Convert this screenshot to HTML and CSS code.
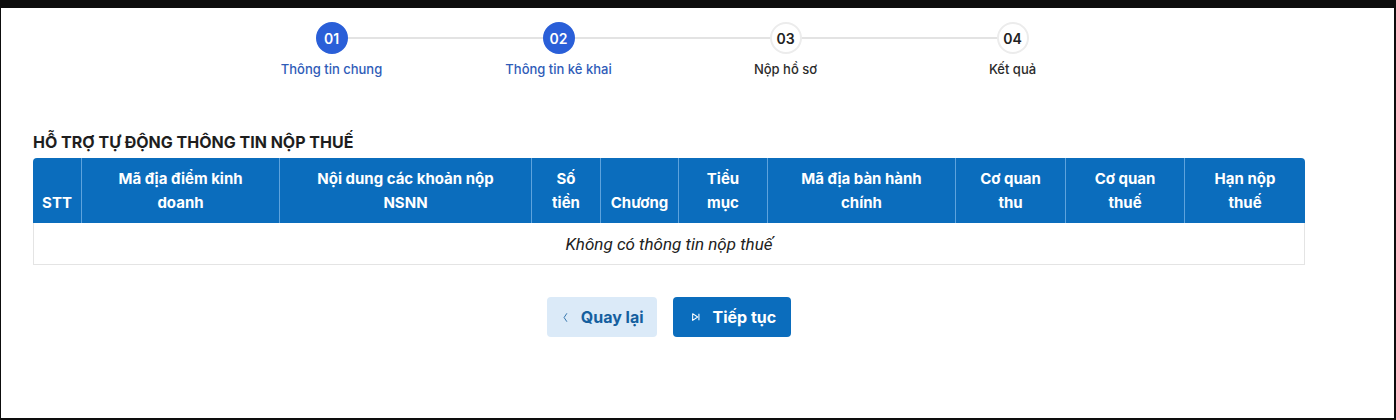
FILE: index.html
```html
<!DOCTYPE html>
<html lang="vi">
<head>
  <meta charset="utf-8">
  <meta name="viewport" content="width=device-width, initial-scale=1.0">
  <title>Khai thuế | Thông tin kê khai</title>
  <link rel="stylesheet" href="styles.css">
</head>
<body>
  <div class="page">
    <ol class="stepper">
      <li class="step done">
        <span class="step-num">01</span>
        <span class="step-label">Thông tin chung</span>
      </li>
      <li class="step done">
        <span class="step-num">02</span>
        <span class="step-label">Thông tin kê khai</span>
      </li>
      <li class="step">
        <span class="step-num">03</span>
        <span class="step-label">Nộp hồ sơ</span>
      </li>
      <li class="step">
        <span class="step-num">04</span>
        <span class="step-label">Kết quả</span>
      </li>
    </ol>

    <h2 class="section-title">Hỗ trợ tự động thông tin nộp thuế</h2>

    <table class="tax-table">
      <thead>
        <tr>
          <th class="col-stt">STT</th>
          <th class="col-ma">Mã địa điểm kinh<br>doanh</th>
          <th class="col-nd">Nội dung các khoản nộp<br>NSNN</th>
          <th class="col-tien">Số<br>tiền</th>
          <th class="col-chuong">Chương</th>
          <th class="col-muc">Tiểu<br>mục</th>
          <th class="col-dbhc">Mã địa bàn hành<br>chính</th>
          <th class="col-cqt">Cơ quan<br>thu</th>
          <th class="col-cqthue">Cơ quan<br>thuế</th>
          <th class="col-han">Hạn nộp<br>thuế</th>
        </tr>
      </thead>
      <tbody>
        <tr>
          <td class="empty" colspan="10">Không có thông tin nộp thuế</td>
        </tr>
      </tbody>
    </table>

    <div class="actions">
      <button class="btn btn-back">
        <svg viewBox="0 0 10 16" width="7" height="13"><path d="M7 2 L3 8 L7 14" fill="none" stroke="currentColor" stroke-width="1.2"/></svg>
        Quay lại
      </button>
      <button class="btn btn-next">
        <svg viewBox="0 0 12 12" width="10" height="10"><path d="M2 2 L8 6 L2 10 Z" fill="none" stroke="currentColor" stroke-width="1.3" stroke-linejoin="round"/><path d="M9.5 2 V10" stroke="currentColor" stroke-width="1.3"/></svg>
        Tiếp tục
      </button>
    </div>
  </div>
</body>
</html>
```

FILE: styles.css
```css
* {
  box-sizing: border-box;
  margin: 0;
  padding: 0;
}
body {
  background: #0d0d0d;
  font-family: Inter, Roboto, "Noto Sans", sans-serif;
  color: #222;
}
.page {
  background: #fff;
  margin: 8px 2px 0 1px;
  height: 410px;
  padding: 14px 32px 0;
}

/* stepper */
.stepper {
  list-style: none;
  display: flex;
  width: 908px;
  margin-left: 185px;
}
.step {
  flex: 1;
  display: flex;
  flex-direction: column;
  align-items: center;
  position: relative;
}
.step + .step::before {
  content: "";
  position: absolute;
  top: 15px;
  left: -50%;
  right: 50%;
  height: 2px;
  background: #e3e3e3;
}
.step-num {
  position: relative;
  z-index: 1;
  width: 32px;
  height: 32px;
  border-radius: 50%;
  border: 2px solid #ececec;
  background: #fff;
  display: flex;
  align-items: center;
  justify-content: center;
  font-size: 14px;
  font-weight: 600;
  color: #222;
}
.step.done .step-num {
  background: #2a5fd8;
  border-color: #2a5fd8;
  color: #fff;
}
.step-label {
  margin-top: 6px;
  font-size: 13px;
  line-height: 18px;
  font-weight: 500;
  color: #2b2b2b;
}
.step.done .step-label {
  color: #2f5cb8;
}

.section-title {
  margin-top: 53px;
  font-size: 16px;
  line-height: 22px;
  font-weight: 700;
  text-transform: uppercase;
  color: #1e1e1e;
}

/* table */
.tax-table {
  margin-top: 5px;
  width: 1272px;
  border-collapse: separate;
  border-spacing: 0;
  font-size: 15px;
}
.tax-table th {
  background: #0b6dbd;
  color: #fff;
  font-weight: 700;
  line-height: 24px;
  padding: 9px 4px 8px;
  vertical-align: bottom;
  text-align: center;
  border-left: 1px solid #5ea3dd;
}
.tax-table th:first-child {
  border-left: none;
  border-top-left-radius: 4px;
}
.tax-table th:last-child {
  border-top-right-radius: 4px;
}
.col-stt { width: 48px; }
.col-ma { width: 198px; }
.col-nd { width: 252px; }
.col-tien { width: 69px; }
.col-chuong { width: 78px; }
.col-muc { width: 89px; }
.col-dbhc { width: 188px; }
.col-cqt { width: 110px; }
.col-cqthue { width: 119px; }
.col-han { width: 121px; }
.tax-table td.empty {
  height: 42px;
  text-align: center;
  font-family: Roboto, sans-serif;
  font-style: italic;
  font-size: 17px;
  color: #222;
  border: 1px solid #e4e4e4;
  border-top: none;
}

/* buttons */
.actions {
  display: flex;
  justify-content: center;
  gap: 16px;
  width: 1272px;
  margin-top: 32px;
}
.btn {
  height: 40px;
  border: none;
  border-radius: 4px;
  display: flex;
  align-items: center;
  gap: 12px;
  font-family: Inter, sans-serif;
  font-size: 16px;
  font-weight: 700;
  cursor: pointer;
}
.btn-back {
  padding: 0 13px 0 15px;
  background: #dbeaf8;
  color: #155f9f;
}
.btn-next {
  padding: 0 15px 0 18px;
  background: #0b6dbd;
  color: #fff;
}
```
